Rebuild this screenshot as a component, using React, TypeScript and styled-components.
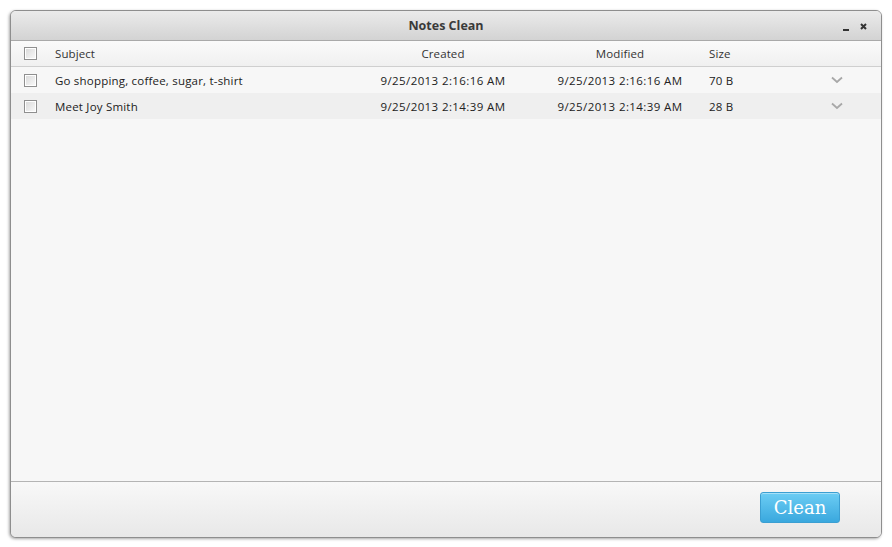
import React from "react";
import styled, { createGlobalStyle } from "styled-components";

const Global = createGlobalStyle`
  html, body { margin: 0; padding: 0; background: #ffffff; }
  body { font-family: "Open Sans", "DejaVu Sans", sans-serif; }
  * { box-sizing: border-box; }
`;

const Page = styled.div`
  padding: 10px 10px 9px 10px;
  width: 892px;
  height: 547px;
`;

const Window = styled.div`
  width: 872px;
  height: 528px;
  border: 1px solid #8e8e8e;
  border-radius: 6px;
  box-shadow: -1px 1px 3px rgba(0, 0, 0, 0.35);
  display: flex;
  flex-direction: column;
  overflow: hidden;
  background: #f7f7f7;
`;

const TitleBar = styled.div`
  height: 30px;
  flex: none;
  display: grid;
  grid-template-columns: 1fr auto 1fr;
  align-items: center;
  background: linear-gradient(#ebebeb, #d3d3d3);
  border-bottom: 1px solid #a9a9a9;
`;

const Title = styled.div`
  grid-column: 2;
  font-size: 12.5px;
  font-weight: 700;
  color: #3a3a3a;
`;

const WinControls = styled.div`
  grid-column: 3;
  justify-self: end;
  display: flex;
  align-items: center;
  gap: 11px;
  padding-right: 14px;
  padding-top: 2px;
`;

const MinGlyph = styled.span`
  display: block;
  width: 6px;
  height: 2px;
  background: #333;
  margin-top: 6px;
`;

const Grid = styled.div`
  display: grid;
  grid-template-columns: 34px 310px 176px 178px 108px 40px 1fr;
  align-items: center;
`;

const HeaderRow = styled(Grid)`
  height: 26px;
  background: linear-gradient(#fafafa, #f0f0f0);
  border-bottom: 1px solid #cfcfcf;
  font-size: 11.5px;
  letter-spacing: 0.1px;
  color: #333;
`;

const Row = styled(Grid)<{ $alt?: boolean }>`
  height: 26px;
  background: ${(p) => (p.$alt ? "#efefef" : "#f7f7f7")};
  font-size: 11.5px;
  letter-spacing: 0.2px;
  color: #222;
`;

const Cell = styled.div<{ $align?: "left" | "center"; $wide?: boolean }>`
  text-align: ${(p) => p.$align ?? "left"};
  letter-spacing: ${(p) => (p.$wide ? "0.4px" : "inherit")};
  white-space: nowrap;
  overflow: hidden;
`;

const SubjectCell = styled(Cell)`
  padding-left: 10px;
`;

const CheckCell = styled.div`
  display: flex;
  padding-left: 13px;
`;

const Check = styled.span`
  display: block;
  width: 13px;
  height: 13px;
  border: 1px solid #8f8f8f;
  background: linear-gradient(135deg, #d8d8d8, #fbfbfb);
  box-shadow: inset 0 0 0 1px #ffffff;
`;

const Body = styled.div`
  flex: 1;
  display: flex;
  flex-direction: column;
  background: #f7f7f7;
`;

const Footer = styled.div`
  height: 56px;
  flex: none;
  border-top: 1px solid #b4b4b4;
  background: linear-gradient(#f8f8f8, #e8e8e8);
  display: flex;
  justify-content: flex-end;
  align-items: flex-start;
  padding: 10px 41px 0 0;
`;

const CleanButton = styled.button`
  width: 80px;
  height: 31px;
  border: 1px solid #3b9fd2;
  border-radius: 3px;
  background: linear-gradient(#6ccdf4, #3aa8de);
  color: #ffffff;
  font-family: "DejaVu Serif", "Liberation Serif", serif;
  font-size: 18px;
  padding: 0;
  box-shadow: inset 0 1px 0 rgba(255, 255, 255, 0.4);
`;

const Chevron = () => (
  <svg width="12" height="8" viewBox="0 0 12 8" style={{ display: "block", margin: "0 auto" }}>
    <path d="M1 1.5 L6 6 L11 1.5" fill="none" stroke="#a8a8a8" strokeWidth="1.8" />
  </svg>
);

const CloseGlyph = () => (
  <svg width="7" height="7" viewBox="0 0 7 7" style={{ display: "block" }}>
    <path d="M1 1 L6 6 M6 1 L1 6" stroke="#333" strokeWidth="2" />
  </svg>
);

const notes = [
  { subject: "Go shopping, coffee, sugar, t-shirt", created: "9/25/2013 2:16:16 AM", modified: "9/25/2013 2:16:16 AM", size: "70 B" },
  { subject: "Meet Joy Smith", created: "9/25/2013 2:14:39 AM", modified: "9/25/2013 2:14:39 AM", size: "28 B" },
];

export default function App() {
  return (
    <>
      <Global />
      <Page>
        <Window>
          <TitleBar>
            <Title>Notes Clean</Title>
            <WinControls>
              <MinGlyph />
              <CloseGlyph />
            </WinControls>
          </TitleBar>
          <HeaderRow>
            <CheckCell><Check /></CheckCell>
            <SubjectCell>Subject</SubjectCell>
            <Cell $align="center">Created</Cell>
            <Cell $align="center">Modified</Cell>
            <Cell>Size</Cell>
            <Cell />
            <Cell />
          </HeaderRow>
          <Body>
            {notes.map((n, i) => (
              <Row key={i} $alt={i % 2 === 1}>
                <CheckCell><Check /></CheckCell>
                <SubjectCell>{n.subject}</SubjectCell>
                <Cell $align="center" $wide>{n.created}</Cell>
                <Cell $align="center" $wide>{n.modified}</Cell>
                <Cell>{n.size}</Cell>
                <Cell><Chevron /></Cell>
                <Cell />
              </Row>
            ))}
          </Body>
          <Footer>
            <CleanButton>Clean</CleanButton>
          </Footer>
        </Window>
      </Page>
    </>
  );
}
